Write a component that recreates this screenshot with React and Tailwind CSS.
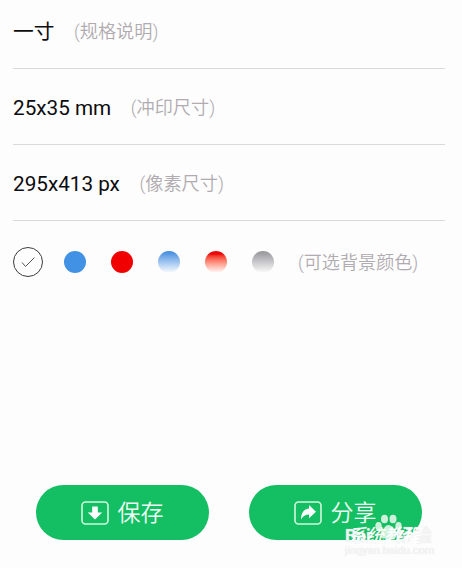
import React, { useState } from "react";

const specs = [
  { value: "一寸", note: "(规格说明)" },
  { value: "25x35 mm", note: "(冲印尺寸)" },
  { value: "295x413 px", note: "(像素尺寸)" },
];

const swatches = [
  { id: "blue", fill: "bg-[#4191e4]" },
  { id: "red", fill: "bg-[#f00000]" },
  { id: "blue-fade", fill: "bg-linear-to-b from-[#3a89dd] to-[#fdfdfd]" },
  { id: "red-fade", fill: "bg-linear-to-b from-[#ec0808] from-15% to-[#fdfdfd]" },
  { id: "gray-fade", fill: "bg-linear-to-b from-[#969499] to-[#fdfdfd]" },
];

function SaveIcon() {
  return (
    <svg width="28" height="24" viewBox="0 0 28 24" fill="none">
      <rect x="1" y="1" width="26" height="22" rx="3.5" stroke="#d3f7df" strokeWidth="1.6" />
      <path d="M11.200 5.500h5.600v6h4.400L14 18.600 6.800 11.500h4.400z" fill="white" />
    </svg>
  );
}

function ShareIcon() {
  return (
    <svg width="28" height="24" viewBox="0 0 28 24" fill="none">
      <rect x="1" y="1" width="26" height="22" rx="3.5" stroke="#d3f7df" strokeWidth="1.6" />
      <path d="M15 4l7 6.800-7 6.400V13.400c-3.600 0-6 1.500-8 5.200C7 12 9.800 8 15 7.400z" fill="white" />
    </svg>
  );
}

function Watermark() {
  return (
    <div className="absolute left-[345px] top-[514px] w-[92px] h-[46px] pointer-events-none">
      <svg className="absolute left-[30px] top-0" width="27" height="26" viewBox="0 0 27 26" fill="#cdf1da">
        <ellipse cx="9.500" cy="5" rx="3.500" ry="4.300" />
        <ellipse cx="18" cy="5" rx="3.500" ry="4.300" />
        <ellipse cx="3.500" cy="12" rx="3.200" ry="4" />
        <ellipse cx="23.500" cy="12" rx="3.200" ry="4" />
        <path d="M13.500 11c3 0 4 3 6.500 5.500s2 8-1.500 8h-10c-3.500 0-4-5.500-1.500-8s3.500-5.500 6.500-5.500z" />
      </svg>
      <p className="absolute left-0 top-[14px] text-[18px] leading-[16px] font-bold text-white/70 whitespace-nowrap [text-shadow:0_0_1px_#dadada]">
        Bai
        <span className="ml-[25px]">经验</span>
      </p>
      <p className="absolute left-[3px] top-[14px] text-[18px] leading-[16px] font-medium italic text-white whitespace-nowrap">
        系统教程
      </p>
      <p className="absolute left-0 top-[31px] text-[11px] leading-[12px] text-[#f6f6f6] whitespace-nowrap [text-shadow:0_0_1px_#dcdcdc]">
        jingyan.baidu.com
      </p>
    </div>
  );
}

export default function App() {
  const [selected, setSelected] = useState("white");

  return (
    <div className="relative w-[462px] h-[568px] overflow-hidden bg-[#fdfdfd] font-[Roboto,'Noto_Sans_CJK_SC',sans-serif]">
      <div className="pl-[13px] pr-[17px]">
        {specs.map((spec, i) => (
          <div
            key={spec.value}
            className={`flex items-center border-b border-[#dadada] ${i === 0 ? "h-[69px] pb-[5px]" : "h-[76px] pt-[2px]"}`}
          >
            <span className="text-[20.7px] leading-[30px] text-[#0c0c0e]">{spec.value}</span>
            <span className="ml-[19.5px] pt-px text-[18.2px] leading-[30px] font-[350] text-[#b0abb0]">{spec.note}</span>
          </div>
        ))}

        <div className="flex items-center h-[81px]">
          <button
            onClick={() => setSelected("white")}
            className="size-[30px] rounded-full border border-[#3c3c42] flex items-center justify-center"
          >
            {selected === "white" && (
              <svg width="16" height="12" viewBox="0 0 16 12" fill="none" stroke="#55555b" strokeWidth="1">
                <path d="M2 6.500l3.500 4L14.500 1.500" />
              </svg>
            )}
          </button>
          <div className="flex gap-[25px] ml-[21px]">
            {swatches.map((s) => (
              <button
                key={s.id}
                onClick={() => setSelected(s.id)}
                className={`size-[22px] rounded-full ${s.fill}`}
              />
            ))}
          </div>
          <span className="ml-[24px] pt-[2px] text-[18.1px] leading-[30px] font-[350] text-[#b0abb0]">(可选背景颜色)</span>
        </div>
      </div>

      <div className="flex gap-[40px] mt-[183px] pl-[36px] text-[23px] leading-[34px] font-[350] text-[#f0fff5]">
        <button className="w-[173px] h-[55px] pr-px rounded-full bg-[#13bf62] flex items-center justify-center gap-[9px]">
          <SaveIcon />
          <span className="pt-[2px]">保存</span>
        </button>
        <button className="w-[173px] h-[55px] pr-px rounded-full bg-[#13bf62] flex items-center justify-center gap-[9px]">
          <ShareIcon />
          <span className="pt-[2px]">分享</span>
        </button>
      </div>

      <Watermark />
    </div>
  );
}
